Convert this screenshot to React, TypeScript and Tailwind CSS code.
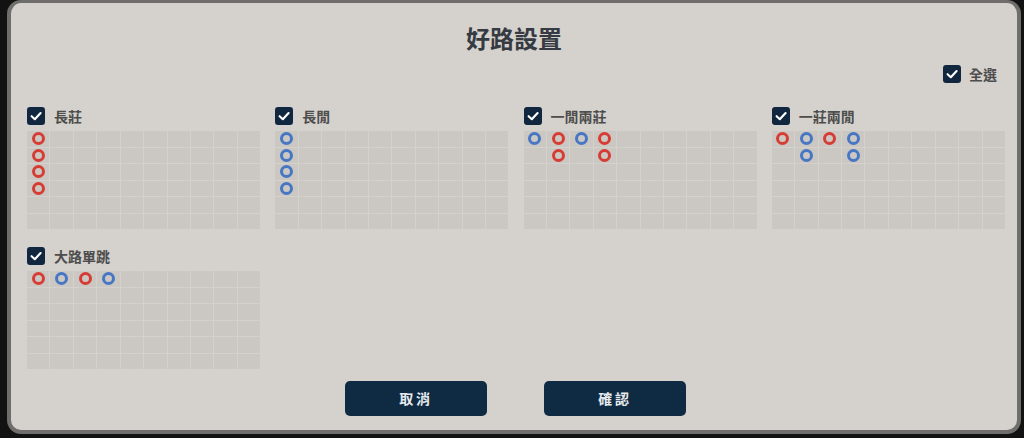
import React from 'react';

type Bead = { c: number; r: number; red: boolean };

const FONT = { fontFamily: '"Noto Sans CJK TC", "Noto Sans", sans-serif' };

const roads: { label: string; beads: Bead[] }[] = [
  {
    label: '長莊',
    beads: [0, 1, 2, 3].map(r => ({ c: 0, r, red: true })),
  },
  {
    label: '長閒',
    beads: [0, 1, 2, 3].map(r => ({ c: 0, r, red: false })),
  },
  {
    label: '一閒兩莊',
    beads: [
      { c: 0, r: 0, red: false },
      { c: 1, r: 0, red: true },
      { c: 1, r: 1, red: true },
      { c: 2, r: 0, red: false },
      { c: 3, r: 0, red: true },
      { c: 3, r: 1, red: true },
    ],
  },
  {
    label: '一莊兩閒',
    beads: [
      { c: 0, r: 0, red: true },
      { c: 1, r: 0, red: false },
      { c: 1, r: 1, red: false },
      { c: 2, r: 0, red: true },
      { c: 3, r: 0, red: false },
      { c: 3, r: 1, red: false },
    ],
  },
  {
    label: '大路單跳',
    beads: [
      { c: 0, r: 0, red: true },
      { c: 1, r: 0, red: false },
      { c: 2, r: 0, red: true },
      { c: 3, r: 0, red: false },
    ],
  },
];

function CheckBox() {
  return (
    <div className="w-[18px] h-[18px] rounded-[3px] bg-[#10273f] flex items-center justify-center flex-shrink-0">
      <svg width="14" height="14" viewBox="0 0 14 14">
        <polyline points="2.6,7.2 5.8,10.2 11.6,4" fill="none" stroke="#ffffff" strokeWidth="2.1" strokeLinecap="round" strokeLinejoin="round" />
      </svg>
    </div>
  );
}

function RoadGrid({ beads }: { beads: Bead[] }) {
  const cells = [];
  for (let r = 0; r < 6; r++) {
    for (let c = 0; c < 10; c++) {
      const bead = beads.find(b => b.c === c && b.r === r);
      cells.push(
        <div key={`${r}-${c}`} className="bg-[#cbc7c2] flex items-center justify-center">
          {bead && (
            <div
              className={
                bead.red
                  ? 'w-[13px] h-[13px] rounded-full border-[3px] border-[#d63c34]'
                  : 'w-[13px] h-[13px] rounded-full border-[3px] border-[#4676c4]'
              }
            />
          )}
        </div>
      );
    }
  }
  return (
    <div className="grid grid-cols-10 grid-rows-6 gap-px bg-[#d5d1cc] w-full h-[98px]">
      {cells}
    </div>
  );
}

export default function App() {
  return (
    <div className="w-[1024px] h-[438px] bg-[#121212] pl-[7px] overflow-hidden" style={FONT}>
      <div className="w-[1014px] h-[434px] rounded-[14px] border-[4px] border-t-[3px] border-[#6f6e6c] bg-[#d5d1cc] flex flex-col">
        {/* Title */}
        <div className="pt-[19px] h-[51px] flex items-start justify-center">
          <h1 className="text-[24px] leading-[32px] font-bold text-[#363b43]">好路設置</h1>
        </div>

        {/* Select all */}
        <div className="mt-[11px] flex items-center justify-end gap-[8px] pr-[20px] h-[18px]">
          <CheckBox />
          <span className="text-[14px] font-semibold text-[#4d4d4d] leading-none">全選</span>
        </div>

        {/* Roads */}
        <div className="mt-[24px] pl-[16px] w-[994px] grid grid-cols-4 gap-x-[15px] gap-y-[18px]">
          {roads.map((road, i) => (
            <div key={i} className="flex flex-col gap-[6px]">
              <div className="flex items-center gap-[9px] h-[18px]">
                <CheckBox />
                <span className="text-[14px] font-semibold text-[#4d4d4d] leading-none">{road.label}</span>
              </div>
              <RoadGrid beads={road.beads} />
            </div>
          ))}
        </div>

        {/* Buttons */}
        <div className="mt-[12px] flex justify-center gap-[57px] pl-[3px]">
          <button className="w-[142px] h-[35px] rounded-[5px] bg-[#0f2a43] text-[14px] font-bold text-[#e6eaee] tracking-[0.2em]">
            取消
          </button>
          <button className="w-[142px] h-[35px] rounded-[5px] bg-[#0f2a43] text-[14px] font-bold text-[#e6eaee] tracking-[0.2em]">
            確認
          </button>
        </div>
      </div>
    </div>
  );
}
